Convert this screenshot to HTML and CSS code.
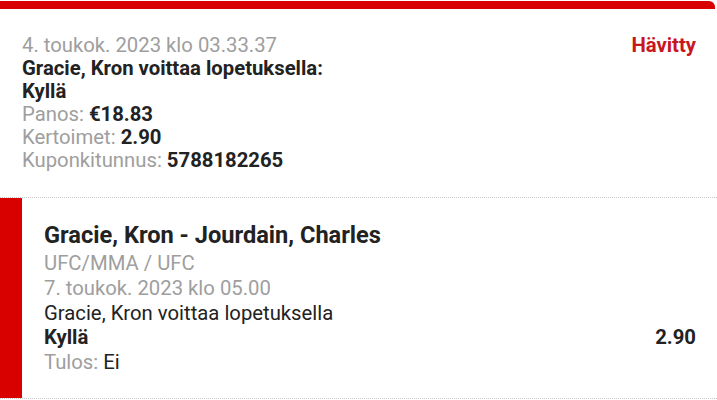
FILE: index.html
```html
<!DOCTYPE html>
<html lang="fi">
<head>
  <meta charset="UTF-8" />
  <meta name="viewport" content="width=device-width, initial-scale=1.0" />
  <title>Kuponki</title>
  <link rel="stylesheet" href="styles.css">
</head>
<body>
  <div class="card">
    <div class="card-top"></div>
    <div class="summary">
      <div class="summary-info">
        <div class="muted">4. toukok. 2023 klo 03.33.37</div>
        <div class="strong">Gracie, Kron voittaa lopetuksella:</div>
        <div class="strong">Kyllä</div>
        <div><span class="muted">Panos: </span><span class="strong">€18.83</span></div>
        <div><span class="muted">Kertoimet: </span><span class="strong">2.90</span></div>
        <div><span class="muted">Kuponkitunnus: </span><span class="strong">5788182265</span></div>
      </div>
      <div class="status">Hävitty</div>
    </div>
    <div class="selection">
      <div class="selection-mark"></div>
      <div class="selection-body">
        <div class="event">Gracie, Kron - Jourdain, Charles</div>
        <div class="muted">UFC/MMA / UFC</div>
        <div class="muted">7. toukok. 2023 klo 05.00</div>
        <div class="text">Gracie, Kron voittaa lopetuksella</div>
        <div class="pick-row">
          <span class="strong">Kyllä</span>
          <span class="strong">2.90</span>
        </div>
        <div><span class="muted">Tulos: </span><span class="text">Ei</span></div>
      </div>
    </div>
  </div>
</body>
</html>
```

FILE: styles.css
```css
body {
  margin: 0;
  background: #fff;
  font-family: Roboto, "Liberation Sans", sans-serif;
  font-size: 20.3px;
  color: #222;
}

.card {
  padding-top: 1px;
}

.card-top {
  height: 8px;
  margin-right: 2px;
  background: #d90000;
  border-radius: 0 6px 0 0;
}

.summary {
  display: flex;
  justify-content: space-between;
  align-items: flex-start;
  padding: 25px 21px 25px 22px;
  line-height: 23px;
  border-bottom: 1px dotted #c8c8c8;
}

.muted {
  color: #9e9e9e;
}

.strong {
  font-weight: bold;
  color: #222;
}

.text {
  color: #222;
}

.status {
  font-weight: bold;
  color: #c8161e;
}

.selection {
  display: flex;
  border-bottom: 1px dotted #c8c8c8;
}

.selection-mark {
  width: 22px;
  background: #d90000;
}

.selection-body {
  flex: 1;
  padding: 23px 21px 23px 22px;
  line-height: 24.8px;
}

.event {
  font-size: 23.6px;
  font-weight: bold;
  line-height: 28px;
  margin-bottom: 2px;
}

.pick-row {
  display: flex;
  justify-content: space-between;
}
```
